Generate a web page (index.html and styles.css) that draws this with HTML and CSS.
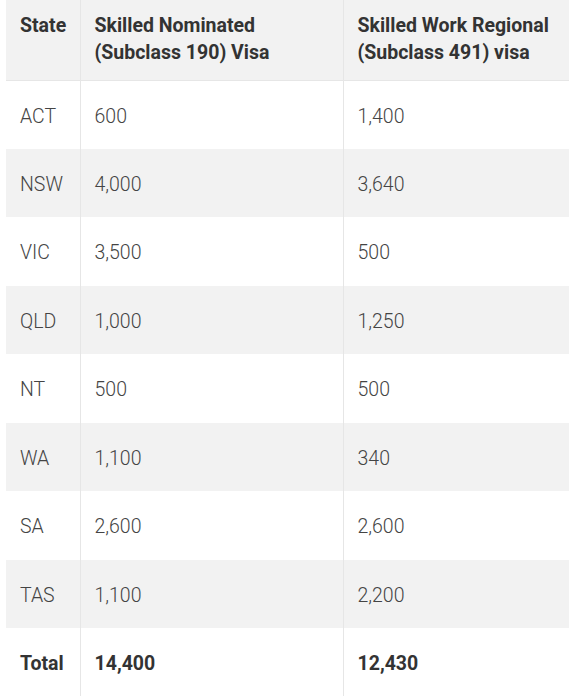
FILE: index.html
```html
<!DOCTYPE html>
<html>
<head>
<meta charset="utf-8">
<link rel="stylesheet" href="styles.css">
</head>
<body>
<table class="visa-table">
  <colgroup>
    <col class="c-state">
    <col class="c-190">
    <col class="c-491">
  </colgroup>
  <thead>
    <tr class="head">
      <th>State</th>
      <th>Skilled Nominated<br>(Subclass 190) Visa</th>
      <th>Skilled Work Regional<br>(Subclass 491) visa</th>
    </tr>
  </thead>
  <tbody>
    <tr><td>ACT</td><td>600</td><td>1,400</td></tr>
    <tr><td>NSW</td><td>4,000</td><td>3,640</td></tr>
    <tr><td>VIC</td><td>3,500</td><td>500</td></tr>
    <tr><td>QLD</td><td>1,000</td><td>1,250</td></tr>
    <tr><td>NT</td><td>500</td><td>500</td></tr>
    <tr><td>WA</td><td>1,100</td><td>340</td></tr>
    <tr><td>SA</td><td>2,600</td><td>2,600</td></tr>
    <tr><td>TAS</td><td>1,100</td><td>2,200</td></tr>
    <tr class="total"><td>Total</td><td>14,400</td><td>12,430</td></tr>
  </tbody>
</table>
</body>
</html>
```
FILE: styles.css
```css
html, body {
  margin: 0;
  padding: 0;
  background: #ffffff;
}
body {
  padding-left: 6px;
}
.visa-table {
  border-collapse: collapse;
  table-layout: fixed;
  width: 563px;
  font-family: Roboto, "Liberation Sans", sans-serif;
  font-size: 19.5px;
  color: #444;
}
.c-state { width: 74px; }
.c-190 { width: 263px; }
.c-491 { width: 226px; }
.visa-table th,
.visa-table td {
  text-align: left;
  vertical-align: middle;
  padding: 0 14px;
  border-left: 1px solid #e6e6e6;
  line-height: 27px;
}
.visa-table th:first-child,
.visa-table td:first-child {
  border-left: none;
}
.visa-table th:last-child,
.visa-table td:last-child {
  border-right: 1px solid #ececec;
}
.head th {
  height: 80px;
  box-sizing: border-box;
  padding-top: 12px;
  padding-bottom: 0;
  vertical-align: top;
  font-weight: 700;
  color: #333;
  background: #f2f2f2;
  border-bottom: 1px solid #e6e6e6;
}
.visa-table td {
  height: 68.5px;
  box-sizing: border-box;
  padding-top: 3px;
  font-weight: 300;
}
.visa-table tbody tr:nth-child(even) td {
  background: #f2f2f2;
}
.total td {
  font-weight: 700;
  color: #333;
}
```
